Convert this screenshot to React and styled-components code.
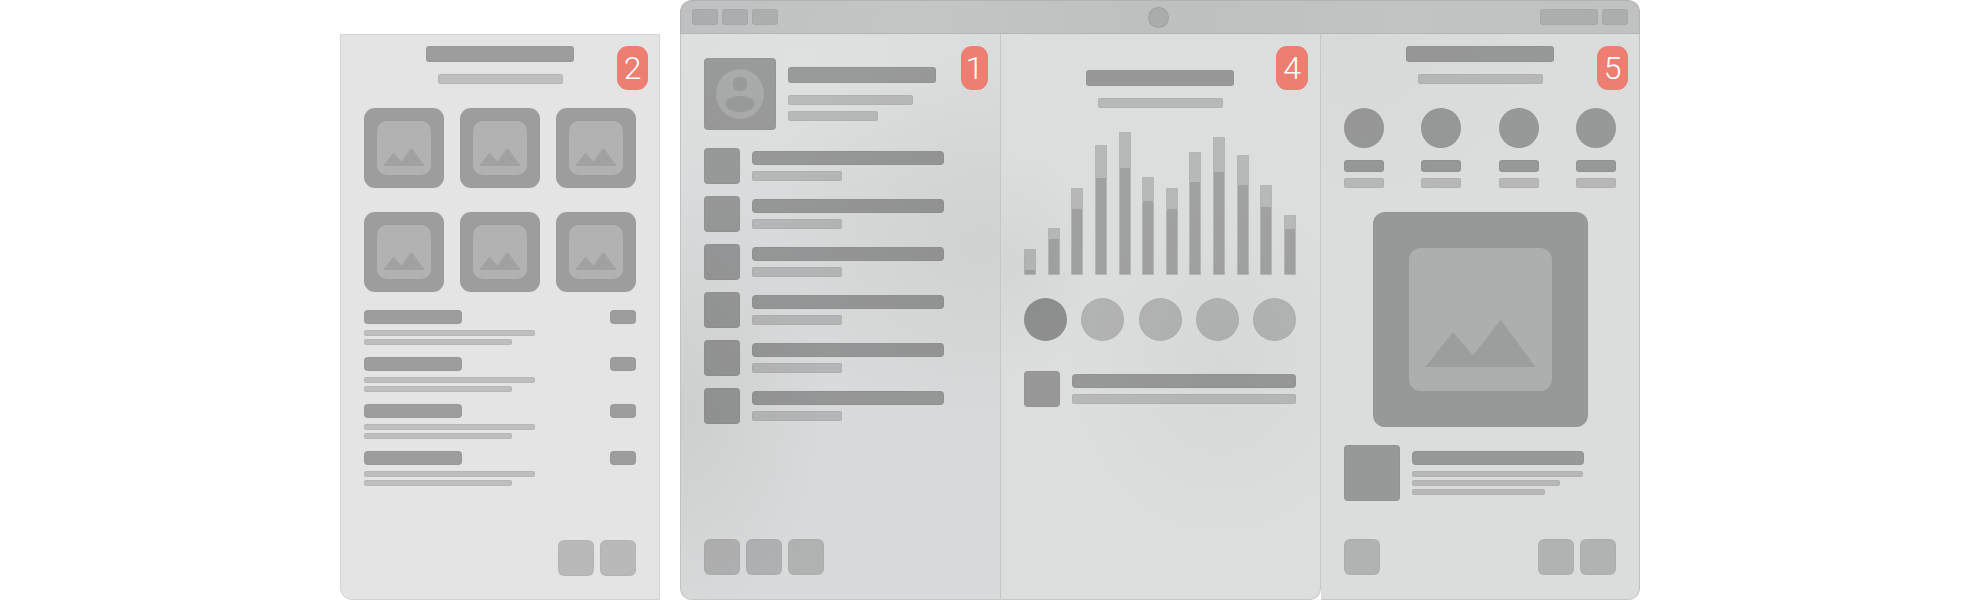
import React from 'react';
import styled, { createGlobalStyle, css } from 'styled-components';

const GlobalStyle = createGlobalStyle`
    * {
        box-sizing : border-box;
    }
    html, body {
        margin : 0;
        background : #ffffff;
    }
`

const DARK = 'rgba(0, 0, 0, 0.31)';
const LIGHT = 'rgba(0, 0, 0, 0.165)';
const SOFT = 'rgba(0, 0, 0, 0.19)';

const BAR_HEIGHTS = [
    [26, 4], [47, 35], [87, 65], [130, 96], [143, 106], [98, 73],
    [87, 65], [123, 92], [138, 102], [120, 89], [90, 67], [60, 45],
];

const Page = styled.div`
    display : flex;
    align-items : flex-end;
    gap : 20px;
    width : 1980px;
    height : 600px;
    padding-left : 340px;
    overflow : hidden;
`

const SidePanel = styled.section`
    position : relative;
    display : flex;
    flex-direction : column;
    width : 320px;
    height : 566px;
    padding : 11px 23px 23px;
    background : #e4e4e4;
    border : 1px solid #d2d2d2;
    border-radius : 0 0 0 12px;
`

const Window = styled.div`
    display : flex;
    flex-direction : column;
    width : 960px;
    height : 600px;
`

const TitleBar = styled.header`
    display : flex;
    align-items : center;
    justify-content : space-between;
    flex : 0 0 34px;
    padding : 0 11px;
    border : 1px solid #b2b3b3;
    border-bottom-color : #b4b5b5;
    border-radius : 12px 12px 0 0;
    background : linear-gradient(100deg, #bfc0c1 0%, #c4c5c5 25%, #bebfbf 50%, #c2c3c3 75%, #c0c1c1 100%);
`

const ToolGroup = styled.div`
    display : flex;
    justify-content : ${p => p.$justify || 'flex-start'};
    gap : 4px;
    width : ${p => p.$width}px;
`

const ToolButton = styled.div`
    width : ${p => p.$width}px;
    height : 16px;
    background : rgba(0, 0, 0, 0.1);
    border : 1px solid rgba(0, 0, 0, 0.04);
    border-radius : 3px;
`

const Camera = styled.div`
    width : 21px;
    height : 21px;
    background : rgba(0, 0, 0, 0.1);
    border : 1px solid rgba(0, 0, 0, 0.08);
    border-radius : 50%;
`

const Body = styled.div`
    display : grid;
    grid-template-columns : 321px 320px 319px;
    flex : 1;
`

const Column = styled.section`
    position : relative;
    display : flex;
    flex-direction : column;
    padding : ${p => p.$top}px 24px 24px 23px;
    border-bottom : 1px solid #c6c7c7;
    ${p => p.$variant === 'first' && css`
        background :
            radial-gradient(230px 190px at 300px 210px, #d0d1d1 0%, rgba(208, 209, 209, 0) 100%),
            radial-gradient(150px 220px at 0px 380px, #cdcece 0%, rgba(205, 206, 206, 0) 100%),
            radial-gradient(300px 170px at 120px 20px, #dfe0e0 0%, rgba(223, 224, 224, 0) 100%),
            #d9dadb;
        border-left : 1px solid #c1c2c2;
        border-right : 1px solid #c5c6c6;
        border-radius : 0 0 0 12px;
    `}
    ${p => p.$variant === 'second' && css`
        background :
            radial-gradient(150px 170px at 220px 330px, #d6d7d7 0%, rgba(214, 215, 215, 0) 100%),
            radial-gradient(90px 110px at 10px 230px, #d4d5d5 0%, rgba(212, 213, 213, 0) 100%),
            #dcdddd;
        border-right : 1px solid #c6c7c7;
        border-radius : 0 0 12px 0;
    `}
    ${p => p.$variant === 'third' && css`
        padding-right : 23px;
        background :
            radial-gradient(200px 170px at 40px 10px, #d8d9d9 0%, rgba(216, 217, 217, 0) 100%),
            #dbdcdc;
        border-right : 1px solid #bfc0c0;
        border-radius : 0 0 12px 0;
    `}
`

const Badge = styled.div`
    position : absolute;
    top : ${p => p.$top}px;
    right : ${p => p.$right}px;
    display : flex;
    align-items : center;
    justify-content : center;
    width : ${p => p.$width}px;
    height : 44px;
    background : #ee7d72;
    border-radius : 11px;
    color : #ffffff;
    font-family : Roboto, "Liberation Sans", sans-serif;
    font-size : 32px;
    font-weight : 300;
    line-height : 1;
`

const Bar = styled.div`
    flex : none;
    width : ${p => (p.$width ? `${p.$width}px` : 'auto')};
    height : ${p => p.$height}px;
    background : ${p => p.$color};
    border : 1px solid rgba(0, 0, 0, 0.04);
    border-radius : ${p => p.$radius || 3}px;
`

const Heading = styled.div`
    display : flex;
    flex-direction : column;
    align-items : center;
    gap : 12px;
`

const TileGrid = styled.div`
    display : grid;
    grid-template-columns : repeat(3, 80px);
    gap : 24px 16px;
    margin-top : 24px;
`

const Tile = styled.div`
    display : flex;
    align-items : center;
    justify-content : center;
    width : ${p => p.$size}px;
    height : ${p => p.$size}px;
    background : ${DARK};
    border : 1px solid rgba(0, 0, 0, 0.03);
    border-radius : ${p => p.$radius}px;
`

const TileInner = styled.div`
    width : ${p => p.$size}px;
    height : ${p => p.$size}px;
    background : rgba(255, 255, 255, 0.22);
    border-radius : ${p => p.$radius}px;
    svg {
        display : block;
        width : 100%;
        height : 100%;
    }
`

const DetailList = styled.div`
    display : flex;
    flex-direction : column;
    gap : 12px;
    margin-top : 18px;
`

const DetailRow = styled.div`
    display : flex;
    flex-direction : column;
`

const DetailHead = styled.div`
    display : flex;
    justify-content : space-between;
    margin-bottom : 6px;
`

const LineStack = styled.div`
    display : flex;
    flex-direction : column;
    gap : ${p => p.$gap || 3}px;
`

const Footer = styled.div`
    display : flex;
    justify-content : ${p => p.$justify || 'flex-start'};
    gap : 6px;
    margin-top : auto;
`

const Square = styled.div`
    flex : none;
    width : ${p => p.$size || 36}px;
    height : ${p => p.$size || 36}px;
    background : ${p => p.$color || SOFT};
    border : 1px solid rgba(0, 0, 0, 0.03);
    border-radius : ${p => p.$radius || 6}px;
`

const ProfileRow = styled.div`
    display : flex;
    align-items : flex-start;
    gap : 12px;
`

const Avatar = styled.div`
    display : flex;
    align-items : center;
    justify-content : center;
    flex : none;
    width : 72px;
    height : 72px;
    background : ${DARK};
    border : 1px solid rgba(0, 0, 0, 0.03);
    border-radius : 4px;
`

const ProfileText = styled.div`
    display : flex;
    flex-direction : column;
    gap : 12px;
    padding-top : 9px;
`

const ContactList = styled.div`
    display : flex;
    flex-direction : column;
    gap : 12px;
    margin-top : 18px;
`

const ContactRow = styled.div`
    display : flex;
    align-items : flex-start;
    gap : 12px;
    margin-top : ${p => p.$top || 0}px;
`

const ContactText = styled.div`
    display : flex;
    flex-direction : column;
    flex : 1;
    gap : 6px;
    padding-top : 3px;
`

const Chart = styled.div`
    display : flex;
    align-items : flex-end;
    justify-content : space-between;
    height : 143px;
    margin-top : 24px;
`

const ChartBar = styled.div`
    display : flex;
    align-items : flex-end;
    width : 12px;
    background : ${LIGHT};
    border : 1px solid rgba(0, 0, 0, 0.02);
    border-radius : 1px;
`

const ChartFill = styled.div`
    width : 100%;
    background : rgba(0, 0, 0, 0.12);
`

const DotRow = styled.div`
    display : flex;
    justify-content : space-between;
    margin-top : 23px;
`

const Dot = styled.div`
    width : ${p => p.$size}px;
    height : ${p => p.$size}px;
    background : ${p => p.$color};
    border : 1px solid rgba(0, 0, 0, 0.03);
    border-radius : 50%;
`

const PersonGrid = styled.div`
    display : grid;
    grid-template-columns : repeat(4, 40px);
    justify-content : space-between;
    margin-top : 24px;
`

const Person = styled.div`
    display : flex;
    flex-direction : column;
    gap : 6px;
    ${Dot} {
        margin-bottom : 6px;
    }
`

const Hero = styled.div`
    display : flex;
    justify-content : center;
    margin-top : 24px;
`

const ArticleRow = styled.div`
    display : flex;
    align-items : flex-start;
    gap : 12px;
    margin-top : 18px;
`

const ArticleText = styled.div`
    display : flex;
    flex-direction : column;
    gap : 6px;
    padding-top : 6px;
`

const FooterSplit = styled(Footer)`
    justify-content : space-between;
`

const ButtonPair = styled.div`
    display : flex;
    gap : 6px;
`

const Mountains = () => (
    <svg viewBox="0 0 143 143" fill="rgba(0, 0, 0, 0.095)">
        <path d="M16.3 119 43.7 84 64 107.3 91.7 71.7 126.7 119Z" />
    </svg>
);

const ImageTile = ({ size, inner, radius, innerRadius }) => (
    <Tile $size={size} $radius={radius}>
        <TileInner $size={inner} $radius={innerRadius}>
            <Mountains />
        </TileInner>
    </Tile>
);

const SideDetail = () => (
    <DetailRow>
        <DetailHead>
            <Bar $width={98} $height={14} $color={DARK} $radius={4} />
            <Bar $width={26} $height={14} $color={DARK} $radius={4} />
        </DetailHead>
        <LineStack>
            <Bar $width={171} $height={6} $color={LIGHT} $radius={2} />
            <Bar $width={148} $height={6} $color={LIGHT} $radius={2} />
        </LineStack>
    </DetailRow>
);

export default function App() {
    return (
        <>
            <GlobalStyle />
            <Page>
                <SidePanel>
                    <Badge $top={11} $right={11} $width={31}>2</Badge>
                    <Heading>
                        <Bar $width={148} $height={16} $color={DARK} />
                        <Bar $width={125} $height={10} $color={LIGHT} $radius={2} />
                    </Heading>
                    <TileGrid>
                        {[0, 1, 2, 3, 4, 5].map(i => (
                            <ImageTile key={i} size={80} inner={54} radius={11} innerRadius={10} />
                        ))}
                    </TileGrid>
                    <DetailList>
                        {[0, 1, 2, 3].map(i => <SideDetail key={i} />)}
                    </DetailList>
                    <Footer $justify="flex-end">
                        <Square />
                        <Square />
                    </Footer>
                </SidePanel>

                <Window>
                    <TitleBar>
                        <ToolGroup $width={258}>
                            <ToolButton $width={26} />
                            <ToolButton $width={26} />
                            <ToolButton $width={26} />
                        </ToolGroup>
                        <Camera />
                        <ToolGroup $width={261} $justify="flex-end">
                            <ToolButton $width={58} />
                            <ToolButton $width={26} />
                        </ToolGroup>
                    </TitleBar>

                    <Body>
                        <Column $variant="first" $top={24}>
                            <Badge $top={12} $right={12} $width={27}>1</Badge>
                            <ProfileRow>
                                <Avatar>
                                    <svg width="48" height="50" viewBox="0 0 48 50">
                                        <ellipse cx="24" cy="25" rx="24" ry="25" fill="rgba(255, 255, 255, 0.16)" />
                                        <circle cx="24" cy="15" r="7.3" fill="#989999" />
                                        <ellipse cx="24" cy="35" rx="14.5" ry="8" fill="#989999" />
                                    </svg>
                                </Avatar>
                                <ProfileText>
                                    <Bar $width={148} $height={16} $color={DARK} />
                                    <LineStack $gap={6}>
                                        <Bar $width={125} $height={10} $color={LIGHT} $radius={2} />
                                        <Bar $width={90} $height={10} $color={LIGHT} $radius={2} />
                                    </LineStack>
                                </ProfileText>
                            </ProfileRow>
                            <ContactList>
                                {[0, 1, 2, 3, 4, 5].map(i => (
                                    <ContactRow key={i}>
                                        <Square $color={DARK} $radius={4} />
                                        <ContactText>
                                            <Bar $width={192} $height={14} $color={DARK} $radius={4} />
                                            <Bar $width={90} $height={10} $color={LIGHT} $radius={2} />
                                        </ContactText>
                                    </ContactRow>
                                ))}
                            </ContactList>
                            <Footer>
                                <Square />
                                <Square />
                                <Square />
                            </Footer>
                        </Column>

                        <Column $variant="second" $top={36}>
                            <Badge $top={12} $right={12} $width={32}>4</Badge>
                            <Heading>
                                <Bar $width={148} $height={16} $color={DARK} />
                                <Bar $width={125} $height={10} $color={LIGHT} $radius={2} />
                            </Heading>
                            <Chart>
                                {BAR_HEIGHTS.map(([total, fill], i) => (
                                    <ChartBar key={i} style={{ height: total }}>
                                        <ChartFill style={{ height: fill }} />
                                    </ChartBar>
                                ))}
                            </Chart>
                            <DotRow>
                                {[0, 1, 2, 3, 4].map(i => (
                                    <Dot key={i} $size={43} $color={i === 0 ? 'rgba(0, 0, 0, 0.35)' : SOFT} />
                                ))}
                            </DotRow>
                            <ContactRow $top={30}>
                                <Square $color={DARK} $radius={4} />
                                <ContactText>
                                    <Bar $height={14} $color={DARK} $radius={4} />
                                    <Bar $height={10} $color={LIGHT} $radius={2} />
                                </ContactText>
                            </ContactRow>
                        </Column>

                        <Column $variant="third" $top={12}>
                            <Badge $top={12} $right={11} $width={31}>5</Badge>
                            <Heading>
                                <Bar $width={148} $height={16} $color={DARK} />
                                <Bar $width={125} $height={10} $color={LIGHT} $radius={2} />
                            </Heading>
                            <PersonGrid>
                                {[0, 1, 2, 3].map(i => (
                                    <Person key={i}>
                                        <Dot $size={40} $color={DARK} />
                                        <Bar $height={12} $color={DARK} />
                                        <Bar $height={10} $color={LIGHT} $radius={2} />
                                    </Person>
                                ))}
                            </PersonGrid>
                            <Hero>
                                <ImageTile size={215} inner={143} radius={12} innerRadius={12} />
                            </Hero>
                            <ArticleRow>
                                <Square $size={56} $color={DARK} $radius={4} />
                                <ArticleText>
                                    <Bar $width={172} $height={14} $color={DARK} $radius={4} />
                                    <LineStack>
                                        <Bar $width={171} $height={6} $color={LIGHT} $radius={2} />
                                        <Bar $width={148} $height={6} $color={LIGHT} $radius={2} />
                                        <Bar $width={133} $height={6} $color={LIGHT} $radius={2} />
                                    </LineStack>
                                </ArticleText>
                            </ArticleRow>
                            <FooterSplit>
                                <Square />
                                <ButtonPair>
                                    <Square />
                                    <Square />
                                </ButtonPair>
                            </FooterSplit>
                        </Column>
                    </Body>
                </Window>
            </Page>
        </>
    );
}
